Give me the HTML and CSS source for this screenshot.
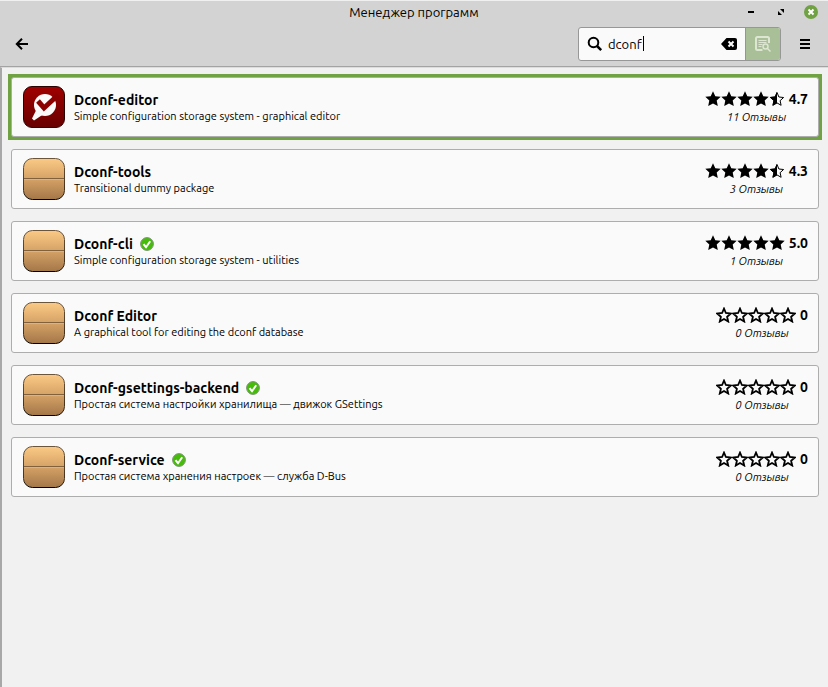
FILE: index.html
```html
<!DOCTYPE html>
<html lang="ru">
<head>
  <meta charset="UTF-8">
  <meta name="viewport" content="width=device-width, initial-scale=1.0">
  <title>Менеджер программ</title>
  <link rel="stylesheet" href="styles.css">
</head>
<body>
  <svg class="sprite" aria-hidden="true">
    <defs>
      <linearGradient id="wood" x1="0" y1="0" x2="0" y2="1">
        <stop offset="0" stop-color="#fcca86"/>
        <stop offset="0.5" stop-color="#d5a266"/>
        <stop offset="1" stop-color="#a47748"/>
      </linearGradient>
      <linearGradient id="red" x1="0" y1="0" x2="0" y2="1">
        <stop offset="0" stop-color="#a00000"/>
        <stop offset="1" stop-color="#680000"/>
      </linearGradient>
      <linearGradient id="edge" x1="0" y1="0" x2="0" y2="1">
        <stop offset="0" stop-color="#6b563b"/>
        <stop offset="0.8" stop-color="#44301c"/>
        <stop offset="1" stop-color="#000"/>
      </linearGradient>
    </defs>
    <symbol id="package" viewBox="0 0 42 42">
      <rect x="0.5" y="0.5" width="41" height="41" rx="9" fill="url(#wood)" stroke="url(#edge)"/>
      <path d="M1 20.5h40" stroke="#80603d"/>
      <path d="M1 21.5h40" stroke="#e0b27a"/>
    </symbol>
    <symbol id="editor" viewBox="0 0 42 42">
      <rect x="0.5" y="0.5" width="41" height="41" rx="8.5" fill="url(#red)" stroke="#2a0303"/>
      <circle cx="22" cy="19" r="11" fill="#fafafa"/>
      <path d="M13 24.500L9 32.500l2 2 9-6z" fill="#fafafa"/>
      <path d="M15 15l6 7L35 9" fill="none" stroke="#8c0000" stroke-width="5"/>
    </symbol>
    <symbol id="star" viewBox="0 0 16 16">
      <path d="M8 .3l2.300 4.900 5.400.6-4 3.700 1.100 5.500L8 12.400l-4.800 2.600 1.100-5.500L.3 5.800l5.400-.6z"/>
    </symbol>
    <symbol id="star-half" viewBox="0 0 16 16">
      <path d="M8 1.500l1.900 4.500 4.700.5-3.500 3.200 1 4.600L8 11.900l-4.100 2.400 1-4.600L1.400 6.500l4.700-.5z" fill="none" stroke="#000"/>
      <path d="M8 .8v11.400L3.500 14.800l1.100-5.200L.7 6.100l5.200-.5z"/>
    </symbol>
    <symbol id="star-empty" viewBox="0 0 16 16">
      <path d="M8 1.600l1.900 4.400 4.900.5-3.700 3.300 1.100 4.700L8 12l-4.200 2.500 1.100-4.700L1.200 6.500l4.900-.5z" fill="none" stroke="#000" stroke-width="1.800"/>
    </symbol>
    <symbol id="installed" viewBox="0 0 14 14">
      <circle cx="7" cy="7" r="6.400" fill="#45bd08" stroke="#7d9277"/>
      <path d="M3.500 7.200l2.500 3 4.200-6" fill="none" stroke="#fff" stroke-width="2"/>
    </symbol>
  </svg>

  <header class="header">
    <div class="titlebar">
      <h1 class="title">Менеджер программ</h1>
      <div class="window-buttons">
        <button type="button" aria-label="Свернуть">
          <svg width="14" height="14" viewBox="0 0 14 14"><path d="M4 7h6" stroke="#000" stroke-width="2"/></svg>
        </button>
        <button type="button" aria-label="Развернуть">
          <svg width="14" height="14" viewBox="0 0 14 14"><path d="M6 4h4v4zM4 6v4h4z"/></svg>
        </button>
        <button type="button" aria-label="Закрыть">
          <svg width="14" height="14" viewBox="0 0 14 14"><circle cx="7" cy="7" r="7" fill="#70a142"/><path d="M4.500 4.500l5 5m0-5l-5 5" stroke="#fff" stroke-width="2"/></svg>
        </button>
      </div>
    </div>
    <div class="toolbar">
      <button type="button" class="back" aria-label="Назад">
        <svg width="16" height="16" viewBox="0 0 16 16"><path d="M14 8H4M8 2.800L2.800 8 8 13.200" fill="none" stroke="#000" stroke-width="2"/></svg>
      </button>
      <form class="search" role="search">
        <label for="query" class="search-icon" aria-label="Поиск">
          <svg width="16" height="16" viewBox="0 0 16 16"><circle cx="6.500" cy="6.500" r="4.800" fill="none" stroke="#000" stroke-width="2"/><path d="M10 10l4.200 4.200" stroke="#000" stroke-width="2.500"/></svg>
        </label>
        <div class="search-box">
          <input type="text" id="query" value="dconf" autocomplete="off" spellcheck="false">
          <span class="caret"></span>
        </div>
        <button type="reset" class="clear" aria-label="Очистить">
          <svg width="16" height="16" viewBox="0 0 16 16"><path d="M0 8l5.500-6H14q2 0 2 2v8q0 2-2 2H5.500z"/><path d="M7.500 5.500l5 5m0-5l-5 5" stroke="#fafafa" stroke-width="2"/></svg>
        </button>
        <button type="button" class="filter" aria-label="Искать в описаниях">
          <svg width="16" height="16" viewBox="0 0 16 16" fill="none" stroke="#dde5d3"><path d="M7.500 14H2.500Q1 14 1 12.500v-10Q1 1 2.500 1h10Q14 1 14 2.500V7" stroke-width="2"/><path d="M3.500 4.500h8M3.500 6.500h8M3.500 8.500h4M3.500 10.500h3"/><circle cx="10.500" cy="10.500" r="2.500" stroke-width="1.500"/><path d="M12.500 12.500l3 3" stroke-width="1.500"/></svg>
        </button>
      </form>
      <button type="button" class="menu" aria-label="Меню">
        <svg width="16" height="16" viewBox="0 0 16 16"><path d="M3 4h10M3 8h10M3 12h10" stroke="#000" stroke-width="2"/></svg>
      </button>
    </div>
  </header>

  <main class="content">
    <ul class="apps">
      <li class="selected">
        <a class="app" href="#dconf-editor">
          <svg class="app-icon"><use href="#editor"/></svg>
          <span class="info">
            <strong class="name">Dconf-editor</strong>
            <span class="summary">Simple configuration storage system - graphical editor</span>
          </span>
          <span class="rating">
            <span class="score"><span class="stars"><svg><use href="#star"/></svg><svg><use href="#star"/></svg><svg><use href="#star"/></svg><svg><use href="#star"/></svg><svg><use href="#star-half"/></svg></span><b>4.7</b></span>
            <em class="reviews">11 Отзывы</em>
          </span>
        </a>
      </li>
      <li>
        <a class="app" href="#dconf-tools">
          <svg class="app-icon"><use href="#package"/></svg>
          <span class="info">
            <strong class="name">Dconf-tools</strong>
            <span class="summary">Transitional dummy package</span>
          </span>
          <span class="rating">
            <span class="score"><span class="stars"><svg><use href="#star"/></svg><svg><use href="#star"/></svg><svg><use href="#star"/></svg><svg><use href="#star"/></svg><svg><use href="#star-half"/></svg></span><b>4.3</b></span>
            <em class="reviews">3 Отзывы</em>
          </span>
        </a>
      </li>
      <li>
        <a class="app" href="#dconf-cli">
          <svg class="app-icon"><use href="#package"/></svg>
          <span class="info">
            <strong class="name">Dconf-cli <svg class="check"><use href="#installed"/></svg></strong>
            <span class="summary">Simple configuration storage system - utilities</span>
          </span>
          <span class="rating">
            <span class="score"><span class="stars"><svg><use href="#star"/></svg><svg><use href="#star"/></svg><svg><use href="#star"/></svg><svg><use href="#star"/></svg><svg><use href="#star"/></svg></span><b>5.0</b></span>
            <em class="reviews">1 Отзывы</em>
          </span>
        </a>
      </li>
      <li>
        <a class="app" href="#dconf-editor-flatpak">
          <svg class="app-icon"><use href="#package"/></svg>
          <span class="info">
            <strong class="name">Dconf Editor</strong>
            <span class="summary">A graphical tool for editing the dconf database</span>
          </span>
          <span class="rating">
            <span class="score"><span class="stars"><svg><use href="#star-empty"/></svg><svg><use href="#star-empty"/></svg><svg><use href="#star-empty"/></svg><svg><use href="#star-empty"/></svg><svg><use href="#star-empty"/></svg></span><b>0</b></span>
            <em class="reviews">0 Отзывы</em>
          </span>
        </a>
      </li>
      <li>
        <a class="app" href="#dconf-gsettings-backend">
          <svg class="app-icon"><use href="#package"/></svg>
          <span class="info">
            <strong class="name">Dconf-gsettings-backend <svg class="check"><use href="#installed"/></svg></strong>
            <span class="summary">Простая система настройки хранилища — движок GSettings</span>
          </span>
          <span class="rating">
            <span class="score"><span class="stars"><svg><use href="#star-empty"/></svg><svg><use href="#star-empty"/></svg><svg><use href="#star-empty"/></svg><svg><use href="#star-empty"/></svg><svg><use href="#star-empty"/></svg></span><b>0</b></span>
            <em class="reviews">0 Отзывы</em>
          </span>
        </a>
      </li>
      <li>
        <a class="app" href="#dconf-service">
          <svg class="app-icon"><use href="#package"/></svg>
          <span class="info">
            <strong class="name">Dconf-service <svg class="check"><use href="#installed"/></svg></strong>
            <span class="summary">Простая система хранения настроек — служба D-Bus</span>
          </span>
          <span class="rating">
            <span class="score"><span class="stars"><svg><use href="#star-empty"/></svg><svg><use href="#star-empty"/></svg><svg><use href="#star-empty"/></svg><svg><use href="#star-empty"/></svg><svg><use href="#star-empty"/></svg></span><b>0</b></span>
            <em class="reviews">0 Отзывы</em>
          </span>
        </a>
      </li>
    </ul>
  </main>
</body>
</html>
```

FILE: styles.css
```css
*{box-sizing:border-box;margin:0;padding:0}
body{display:flex;flex-direction:column;min-height:100vh;background:#f1f1f1;color:#000;font-family:Ubuntu,"Noto Sans",sans-serif;font-size:13px}
button{display:flex;align-items:center;justify-content:center;background:none;border:none;cursor:pointer}
svg{display:block;flex:none}
.sprite{position:absolute;width:0;height:0}

/* header */
.header{background:#d3d3d3;border-top:1px solid #f0f0f0;border-bottom:1px solid #a3a3a3}
.titlebar{display:grid;grid-template-columns:1fr auto 1fr;align-items:center;height:21px;padding:0 10px}
.title{grid-column:2;font-size:13px;font-weight:normal;line-height:22px}
.window-buttons{display:flex;justify-content:flex-end;gap:16px}
.toolbar{display:flex;align-items:center;height:44px;padding:0 15px 0 14px}
.search{display:flex;align-items:center;width:203px;height:34px;margin:0 16px 0 auto;background:#fafafa;border:1px solid #979797;border-radius:3px;overflow:hidden}
.search-icon{padding:0 5px 0 8px}
.search-box{position:relative;flex:1;min-width:0}
.search-box input{display:block;width:100%;border:none;outline:none;background:none;font:inherit;line-height:20px}
.caret{position:absolute;left:35px;top:2px;width:1px;height:15px;background:#000}
.clear{padding:0 8px}
.filter{width:35px;height:100%;background:#a9bf97;border-left:1px solid #8f9a87}

/* results */
.content{flex:1;padding:9px;border-left:2px solid #a8a8a8;border-top:1px solid #dcdcdc}
.apps{display:flex;flex-direction:column;gap:12px;list-style:none}
.selected{background:#70a142;outline:3px solid #70a142}
.app{display:flex;align-items:center;height:60px;padding:0 10px 0 11px;gap:9px;background:#fafafa;border:1px solid #adadad;border-radius:3px;color:inherit;text-decoration:none}
.app-icon{width:42px;height:42px}
.info{flex:1;min-width:0;padding-top:2px}
.name{display:flex;align-items:center;gap:7px;font-size:14px;line-height:16px}
.check{width:14px;height:14px}
.summary{display:block;font-size:11px;line-height:16px}
.rating{display:flex;flex-direction:column;align-items:center;padding-top:2px}
.score{display:flex;align-items:center;gap:4px;font-size:14px;line-height:18px}
.stars{display:flex}
.stars svg{width:16px;height:16px}
.reviews{font-size:11px;line-height:18px}
```
